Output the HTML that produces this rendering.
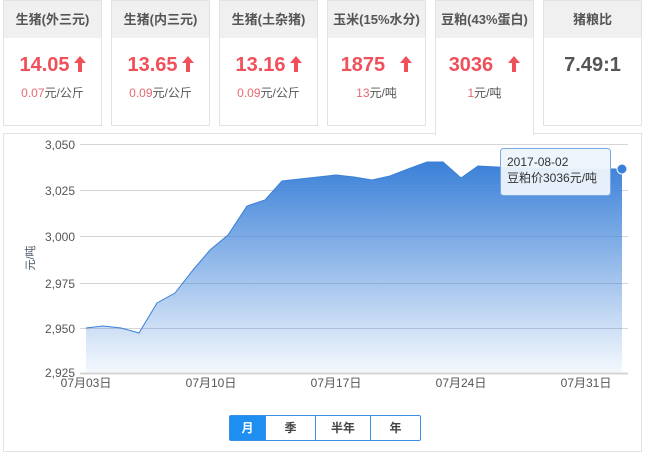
<!DOCTYPE html>
<html><head><meta charset="utf-8"><style>
*{margin:0;padding:0;box-sizing:border-box}
body{width:645px;height:453px;background:#fff;position:relative;overflow:hidden;font-family:"Liberation Sans","Noto Sans CJK SC",sans-serif}
.card{position:absolute;top:0;width:99px;height:126px;border:1px solid #e2e2e2;background:#fff}
.card .h{height:37px;background:#f0f0f0;text-align:center;line-height:37px;font-size:13px;font-weight:bold;color:#555}
.card .v{text-align:center;margin-top:15px;font-size:20px;font-weight:bold;color:#f0505a;height:24px;line-height:24px}
.card .v svg{vertical-align:-1px;margin-left:4px}
.card .s{text-align:center;font-size:12px;color:#555;margin-top:7px}
.card .s b{font-weight:normal;color:#e8696f}
.act{height:135px;border-bottom:none}
.panel{position:absolute;left:3px;top:133px;width:639px;height:319px;border:1px solid #e2e2e2}
.btns{position:absolute;left:229px;top:415px;height:26px;display:flex;border:1px solid #3a8ee6;border-radius:2px}
.btns div{height:24px;line-height:24px;text-align:center;font-size:12px;color:#444;border-left:1px solid #3a8ee6;font-weight:bold}
.btns div:first-child{border-left:none;background:#1e8ff0;color:#fff}
</style></head><body>
<div class="card" style="left:3px"><div class="h">生猪(外三元)</div><div class="v">14.05<svg width="12" height="16" viewBox="0 0 12 16"><path d="M6 0L12 7H8V16H4V7H0Z" fill="#f0505a"/></svg></div><div class="s"><b>0.07</b>元/公斤</div></div>
<div class="card" style="left:111px"><div class="h">生猪(内三元)</div><div class="v">13.65<svg width="12" height="16" viewBox="0 0 12 16"><path d="M6 0L12 7H8V16H4V7H0Z" fill="#f0505a"/></svg></div><div class="s"><b>0.09</b>元/公斤</div></div>
<div class="card" style="left:219px"><div class="h">生猪(土杂猪)</div><div class="v">13.16<svg width="12" height="16" viewBox="0 0 12 16"><path d="M6 0L12 7H8V16H4V7H0Z" fill="#f0505a"/></svg></div><div class="s"><b>0.09</b>元/公斤</div></div>
<div class="card" style="left:327px"><div class="h">玉米(15%水分)</div><div class="v">1875 &nbsp;<svg width="12" height="16" viewBox="0 0 12 16"><path d="M6 0L12 7H8V16H4V7H0Z" fill="#f0505a"/></svg></div><div class="s"><b>13</b>元/吨</div></div>
<div class="card" style="left:543px"><div class="h">猪粮比</div><div class="v" style="color:#555">7.49:1</div></div>
<div class="panel"></div>
<div class="card act" style="left:435px"><div class="h">豆粕(43%蛋白)</div><div class="v">3036 &nbsp;<svg width="12" height="16" viewBox="0 0 12 16"><path d="M6 0L12 7H8V16H4V7H0Z" fill="#f0505a"/></svg></div><div class="s"><b>1</b>元/吨</div></div>
<svg style="position:absolute;left:0;top:0" width="645" height="453">
<defs><linearGradient id="g" x1="0" y1="0" x2="0" y2="1"><stop offset="0" stop-color="#3a80d8"/><stop offset="1" stop-color="#3a80d8" stop-opacity="0.05"/></linearGradient></defs>
<g stroke="#d5d5d5" stroke-width="1">
<line x1="80" y1="144.5" x2="628" y2="144.5"/><line x1="80" y1="190.5" x2="628" y2="190.5"/><line x1="80" y1="236.5" x2="628" y2="236.5"/><line x1="80" y1="283.5" x2="628" y2="283.5"/><line x1="80" y1="328.5" x2="628" y2="328.5"/></g>
<path d="M86,328 L103,326 L121,328 L139,333 L157,303 L175,293 L193,270 L210,250 L228,235 L247,206 L265,200 L282,181 L300,179 L318,177 L336,175 L354,177 L372,180 L390,176 L408,169 L427,162 L443,162 L461,178 L478,166 L497,167 L515,168 L533,168 L551,169 L569,169 L587,169 L605,169 L622,169 L622,373 L86,373Z" fill="url(#g)"/>
<path d="M86,328 L103,326 L121,328 L139,333 L157,303 L175,293 L193,270 L210,250 L228,235 L247,206 L265,200 L282,181 L300,179 L318,177 L336,175 L354,177 L372,180 L390,176 L408,169 L427,162 L443,162 L461,178 L478,166 L497,167 L515,168 L533,168 L551,169 L569,169 L587,169 L605,169 L622,169" fill="none" stroke="#3a80d8" stroke-width="1"/>
<line x1="80" y1="373.5" x2="628" y2="373.5" stroke="#d5d5d5" stroke-width="2"/>
<g font-size="12" fill="#555" text-anchor="end"><text x="75" y="149">3,050</text><text x="75" y="195">3,025</text><text x="75" y="241">3,000</text><text x="75" y="288">2,975</text><text x="75" y="333">2,950</text><text x="75" y="377">2,925</text></g>
<g font-size="12" fill="#555" text-anchor="middle"><text x="86" y="387">07月03日</text><text x="211" y="387">07月10日</text><text x="336" y="387">07月17日</text><text x="461" y="387">07月24日</text><text x="586" y="387">07月31日</text></g>
<text transform="translate(34,258) rotate(-90)" font-size="11" fill="#456" text-anchor="middle">元/吨</text>
<circle cx="622" cy="169" r="5" fill="#3a80d8" stroke="#fff"/>
<rect x="500.5" y="148.5" width="110" height="47" rx="3" fill="#eef4fc" fill-opacity="0.95" stroke="#7aa8e0"/>
<text x="507" y="166" font-size="12" fill="#333">2017-08-02</text><text x="507" y="182" font-size="12" fill="#333">豆粕价3036元/吨</text>
</svg>
<div class="btns"><div style="width:35px">月</div><div style="width:50px">季</div><div style="width:55px">半年</div><div style="width:50px">年</div></div>
</body></html>
